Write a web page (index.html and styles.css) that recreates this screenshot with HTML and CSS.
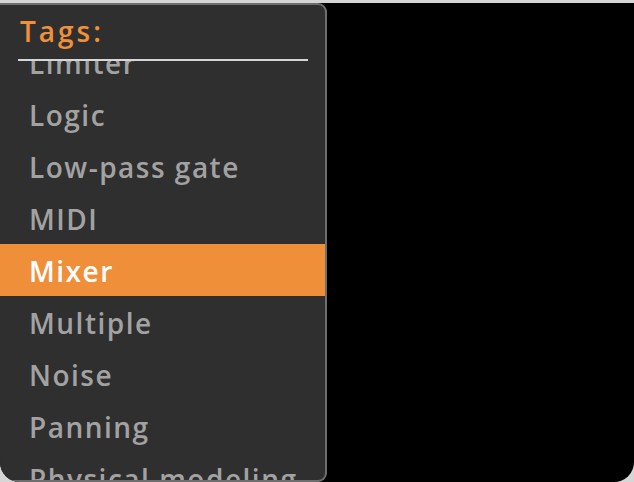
FILE: index.html
```html
<!DOCTYPE html>
<html>
<head>
<meta charset="utf-8">
<link rel="stylesheet" href="styles.css">
</head>
<body>
<div class="window">
  <div class="panel">
    <div class="header">
      <div class="title">Tags:</div>
    </div>
    <div class="list">
      <ul class="items">
        <li class="item">Limiter</li>
        <li class="item">Logic</li>
        <li class="item">Low-pass gate</li>
        <li class="item">MIDI</li>
        <li class="item selected">Mixer</li>
        <li class="item">Multiple</li>
        <li class="item">Noise</li>
        <li class="item">Panning</li>
        <li class="item">Physical modeling</li>
      </ul>
    </div>
  </div>
</div>
</body>
</html>
```

FILE: styles.css
```css
html, body {
  margin: 0;
  padding: 0;
  background: #d6d6d6;
  width: 634px;
  height: 482px;
  overflow: hidden;
}
.window {
  margin-top: 3px;
  height: 479px;
  background: #000;
  border-radius: 0 0 20px 20px;
  overflow: hidden;
  position: relative;
}
.panel {
  position: absolute;
  left: 0;
  top: 0;
  width: 325px;
  height: 475px;
  background: #2f2f2f;
  border: 2px solid #6e6e6e;
  border-left: none;
  border-radius: 0 9px 9px 0;
  display: flex;
  flex-direction: column;
  overflow: hidden;
  font-family: "Open Sans", "Noto Sans", sans-serif;
}
.header {
  margin: 0 17px 0 18px;
  height: 56px;
  border-bottom: 2px solid #d6d6d6;
  box-sizing: border-box;
  flex: none;
}
.title {
  color: #f0913a;
  font-size: 28px;
  font-weight: 600;
  letter-spacing: 3px;
  line-height: 30px;
  padding: 11px 0 0 2px;
}
.list {
  flex: 1;
  overflow: hidden;
}
.items {
  list-style: none;
  margin: -25px 0 0 0;
  padding: 0;
}
.item {
  height: 52px;
  line-height: 54px;
  padding-left: 29px;
  color: #a2a2a2;
  font-size: 28px;
  font-weight: 600;
  letter-spacing: 1.5px;
  white-space: nowrap;
}
.item.selected {
  background: #ef8f3a;
  color: #ffffff;
}
```
